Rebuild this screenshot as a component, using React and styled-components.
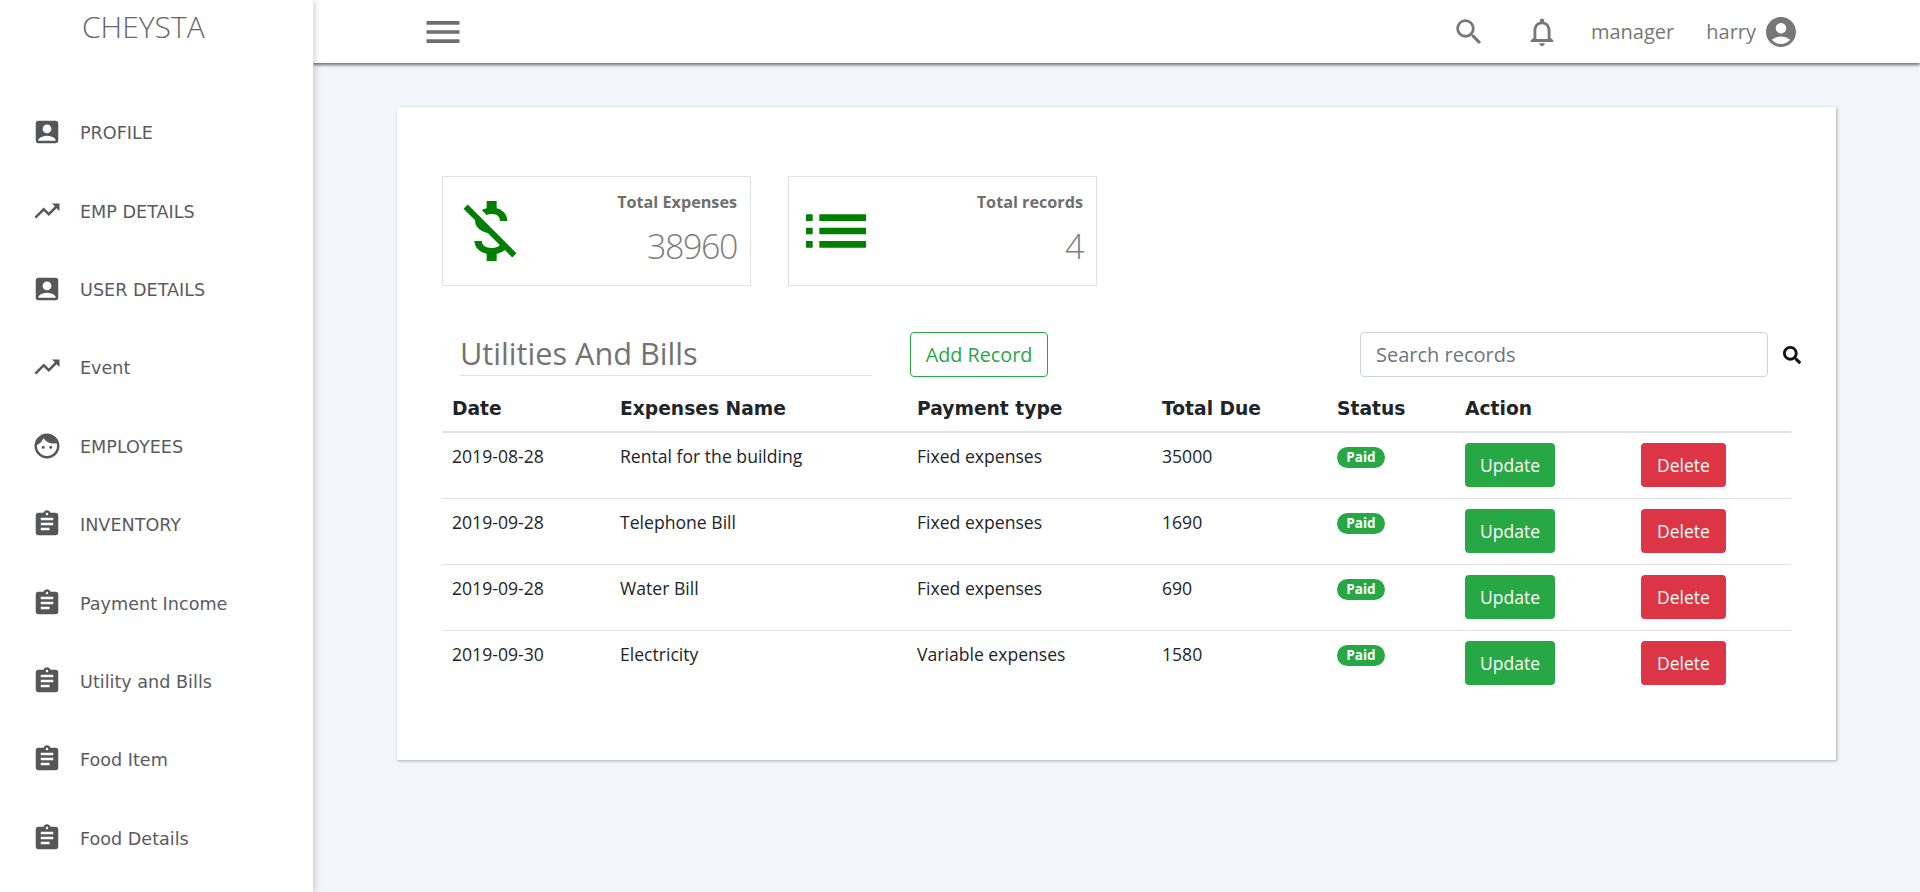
import React from 'react';
import styled, { createGlobalStyle } from 'styled-components';
import { MdAccountBox, MdTrendingUp, MdFace, MdAssignment, MdMenu, MdSearch, MdNotificationsNone, MdAccountCircle, MdMoneyOff, MdList } from 'react-icons/md';
import { FaSearch } from 'react-icons/fa';

const Global = createGlobalStyle`
  html, body { margin: 0; padding: 0; height: 100%; overflow: hidden; background: #f4f5f9; }
  * { box-sizing: border-box; }
  body { font-family: "Open Sans", "DejaVu Sans", sans-serif; }
`;
const Shell = styled.div`display: grid; grid-template-columns: 313px 1fr; height: 892px; overflow: hidden;`;
const Sidebar = styled.aside`
  background: #fff; height: 892px; position: relative; z-index: 2;
  box-shadow: 2px 0 6px rgba(60, 60, 90, .22);
  display: flex; flex-direction: column;
`;
const Logo = styled.div`
  height: 93px; padding: 9px 0 0 82px; font: 300 30px/36px "Open Sans", sans-serif; color: #666;
`;
const Nav = styled.nav`display: flex; flex-direction: column;`;
const NavItem = styled.a`
  height: 78.4px; display: flex; align-items: center; padding-left: 32px; gap: 18px;
  font: 400 17.6px "DejaVu Sans", Verdana, sans-serif; color: #5a5b5f;
  svg { width: 30px; height: 30px; color: #55565a; flex: none; }
`;
const NavLabel = styled.span`padding-top: 2px;`;
const Main = styled.div`display: flex; flex-direction: column; min-width: 0;`;
const Header = styled.header`
  height: 63px; background: #fff; box-shadow: 0 2px 3px rgba(0,0,0,.55);
  display: flex; align-items: center; padding: 0 121px 0 108px; color: #777; position: relative; z-index: 1;
`;
const MenuButton = styled.div`display: flex; svg { width: 44px; height: 44px; color: #6e6e6e; }`;
const HeaderRight = styled.div`
  margin-left: auto; display: flex; align-items: center;
  font: 400 20px "Open Sans", sans-serif; color: #777;
`;
const HeaderIcon = styled.span`display: flex; margin-right: ${p => p.$mr}px; svg { width: ${p => p.$size}px; height: ${p => p.$size}px; color: #777; }`;
const HeaderLabel = styled.span`margin-right: ${p => p.$mr}px;`;
const Content = styled.main`padding: 44px 84px 0;`;
const Card = styled.section`
  background: #fff; height: 653px; padding: 69px 45px 0; box-shadow: 1px 1px 3px rgba(0,0,0,.3);
`;
const Stats = styled.div`display: flex; gap: 37px;`;
const Stat = styled.div`
  width: 309px; height: 110px; border: 1px solid #e0e0e0; display: flex; justify-content: space-between; padding: 13px 13px 0 7px;
`;
const StatIcon = styled.span`display: flex; align-self: center; margin-top: -13px; svg { width: ${p => p.$size}px; height: ${p => p.$size}px; color: green; }`;
const StatText = styled.div`text-align: right;`;
const StatLabel = styled.div`font: 700 16.2px/24px "Open Sans", sans-serif; color: #6f6f6f;`;
const StatValue = styled.div`font: 300 34px/46px "Open Sans", sans-serif; color: #7d7d7d; margin-top: 9px; letter-spacing: -1.4px;`;
const Toolbar = styled.div`display: flex; align-items: center; margin-top: 46px; height: 45px; & > * { flex: none; }`;
const Title = styled.h2`
  margin: 0 0 0 18px; width: 412px; height: 43px; font: 400 30.7px/40px "Open Sans", sans-serif; color: #737373; border-bottom: 1px solid #e2e2e2; 
`;
const AddButton = styled.button`
  margin-left: 38px; width: 138px; height: 45px; border: 1px solid #28a745; border-radius: 4px; background: #fff; color: #28a745;
  font: 400 19.8px "Open Sans", sans-serif; padding: 0;
`;
const SearchBox = styled.input`
  margin-left: 312px; width: 408px; height: 45px; border: 1px solid #ced4da; border-radius: 4px; padding: 0 15px;
  font: 400 20px "Open Sans", sans-serif; color: #495057;
  &::placeholder { color: #6c757d; opacity: 1; }
`;
const SearchIcon = styled.span`display: flex; margin-left: 15px; svg { width: 18px; height: 18px; color: #111; }`;
const Table = styled.table`
  width: 1349px; border-collapse: collapse; table-layout: fixed; margin-top: 11px; color: #212529;
`;
const Th = styled.th`
  height: 44px; padding: 0 10px 3px; text-align: left; font: 700 18.7px "DejaVu Sans", Verdana, sans-serif; color: #212529; border-bottom: 2px solid #dee2e6;
`;
const Td = styled.td`
  height: 66px; padding: 11px 10px 0; vertical-align: top; font: 400 17.6px/24px "Open Sans", sans-serif; color: #212529;
`;
const Tr = styled.tr`& + & td { border-top: 1px solid #dee2e6; }`;
const Badge = styled.span`
  display: inline-block; width: 48px; height: 21px; border-radius: 11px; background: #28a745; color: #fff; text-align: center;
  font: 700 13.5px/20px "Open Sans", sans-serif; margin-top: 3px; vertical-align: top;
`;
const ActionButton = styled.button`
  display: block; width: ${p => p.$w}px; height: 44px; border: 0; border-radius: 4px; background: ${p => p.$bg}; color: #fff;
  font: 400 17.5px "Open Sans", sans-serif; padding: 0; margin-top: -1px;
`;

const nav = [
  ['PROFILE', MdAccountBox], ['EMP DETAILS', MdTrendingUp], ['USER DETAILS', MdAccountBox], ['Event', MdTrendingUp],
  ['EMPLOYEES', MdFace], ['INVENTORY', MdAssignment], ['Payment Income', MdAssignment], ['Utility and Bills', MdAssignment],
  ['Food Item', MdAssignment], ['Food Details', MdAssignment],
];
const rows = [
  ['2019-08-28', 'Rental for the building', 'Fixed expenses', '35000'],
  ['2019-09-28', 'Telephone Bill', 'Fixed expenses', '1690'],
  ['2019-09-28', 'Water Bill', 'Fixed expenses', '690'],
  ['2019-09-30', 'Electricity', 'Variable expenses', '1580'],
];
const cols = [168, 297, 245, 175, 128, 176, 160];

export default function App() {
  return (
    <Shell>
      <Global />
      <Sidebar>
        <Logo>CHEYSTA</Logo>
        <Nav>
          {nav.map(([label, Icon]) => (
            <NavItem key={label}><Icon /><NavLabel>{label}</NavLabel></NavItem>
          ))}
        </Nav>
      </Sidebar>
      <Main>
        <Header>
          <MenuButton><MdMenu /></MenuButton>
          <HeaderRight>
            <HeaderIcon $mr={39} $size={34}><MdSearch /></HeaderIcon>
            <HeaderIcon $mr={32} $size={34}><MdNotificationsNone /></HeaderIcon>
            <HeaderLabel $mr={32}>manager</HeaderLabel>
            <HeaderLabel $mr={7}>harry</HeaderLabel>
            <HeaderIcon $mr={0} $size={36}><MdAccountCircle /></HeaderIcon>
          </HeaderRight>
        </Header>
        <Content>
          <Card>
            <Stats>
              <Stat>
                <StatIcon $size={80}><MdMoneyOff /></StatIcon>
                <StatText><StatLabel>Total Expenses</StatLabel><StatValue>38960</StatValue></StatText>
              </Stat>
              <Stat>
                <StatIcon $size={80}><MdList /></StatIcon>
                <StatText><StatLabel>Total records</StatLabel><StatValue>4</StatValue></StatText>
              </Stat>
            </Stats>
            <Toolbar>
              <Title>Utilities And Bills</Title>
              <AddButton>Add Record</AddButton>
              <SearchBox placeholder="Search records" />
              <SearchIcon><FaSearch /></SearchIcon>
            </Toolbar>
            <Table>
              <colgroup>{cols.map((w, i) => <col key={i} width={w} />)}</colgroup>
              <thead>
                <tr>
                  <Th>Date</Th><Th>Expenses Name</Th><Th>Payment type</Th><Th>Total Due</Th><Th>Status</Th><Th>Action</Th><Th />
                </tr>
              </thead>
              <tbody>
                {rows.map((r, i) => (
                  <Tr key={i}>
                    {r.map((c, j) => <Td key={j}>{c}</Td>)}
                    <Td><Badge>Paid</Badge></Td>
                    <Td><ActionButton $w={90} $bg="#28a745">Update</ActionButton></Td>
                    <Td><ActionButton $w={85} $bg="#dc3545">Delete</ActionButton></Td>
                  </Tr>
                ))}
              </tbody>
            </Table>
          </Card>
        </Content>
      </Main>
    </Shell>
  );
}
